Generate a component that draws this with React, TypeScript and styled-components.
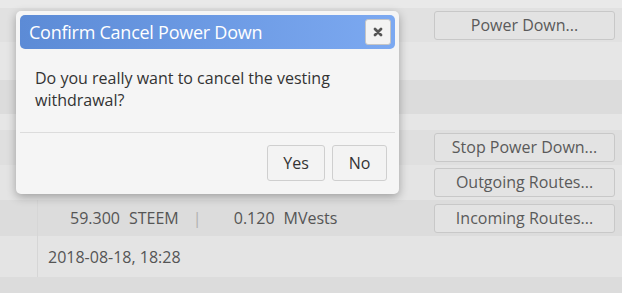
import styled, { createGlobalStyle } from 'styled-components';

const GlobalStyle = createGlobalStyle`
  html, body {
    margin: 0;
    padding: 0;
    background: #dcdcdc;
    font-family: 'Open Sans', 'Liberation Sans', sans-serif;
    overflow: hidden;
  }
`;

const Page = styled.div`
  position: relative;
  width: 622px;
  height: 293px;
  overflow: hidden;
`;

const Table = styled.div`
  display: flex;
  flex-direction: column;
  box-shadow: 0 2px 2px rgba(0, 0, 0, 0.08);
`;

const Row = styled.div<{ $h: number; $bg: string }>`
  display: flex;
  align-items: center;
  height: ${(p) => p.$h}px;
  background: ${(p) => p.$bg};
  color: #555;
  font-size: 16px;
`;

const FirstCell = styled.div<{ $line?: boolean }>`
  width: 37px;
  align-self: stretch;
  border-right: 1px solid ${(p) => (p.$line ? '#d6d6d6' : 'transparent')};
`;

const ValueCell = styled.div`
  flex: 1;
  display: flex;
  align-items: center;
  padding-left: 10px;
`;

const Amount = styled.span<{ $w: number }>`
  display: inline-block;
  width: ${(p) => p.$w}px;
  text-align: right;
`;

const Unit = styled.span`
  margin-left: 9px;
`;

const Sep = styled.span`
  margin-left: 14px;
  color: #b0b0b0;
`;

const ActionCell = styled.div`
  width: 188px;
  display: flex;
  align-items: center;
`;

const ActionButton = styled.button`
  width: 181px;
  height: 29px;
  padding: 0;
  background: #e3e3e3;
  border: 1px solid #c8c8c8;
  border-radius: 3px;
  color: #5a5a5a;
  font-family: inherit;
  font-size: 16px;
  line-height: 27px;
`;

const Dialog = styled.div`
  position: absolute;
  left: 16px;
  top: 11px;
  width: 375px;
  padding: 4px;
  background: #f5f5f5;
  border-radius: 5px;
  box-shadow: 0 3px 10px rgba(0, 0, 0, 0.3);
`;

const Header = styled.div`
  display: flex;
  align-items: center;
  justify-content: space-between;
  height: 34px;
  padding: 0 4px 0 9px;
  border-radius: 5px;
  background: linear-gradient(to right, #5c8bd6, #7ca9f1);
`;

const Title = styled.span`
  color: #fff;
  font-size: 18px;
  font-weight: 400;
  letter-spacing: -0.25px;
`;

const CloseButton = styled.button`
  width: 26px;
  height: 26px;
  padding: 0;
  display: flex;
  align-items: center;
  justify-content: center;
  background: #f3f3f3;
  border: 1px solid #c5c5c5;
  border-radius: 3px;
`;

const Body = styled.div`
  padding: 18px 15px 21px;
  color: #333;
  font-size: 16px;
  line-height: 22px;
`;

const Footer = styled.div`
  display: flex;
  justify-content: flex-end;
  gap: 7px;
  padding: 12px 8px 9px;
  border-top: 1px solid #dcdcdc;
`;

const DialogButton = styled.button<{ $w: number }>`
  width: ${(p) => p.$w}px;
  height: 36px;
  padding: 0;
  background: #f3f3f3;
  border: 1px solid #cfcfcf;
  border-radius: 3px;
  color: #333;
  font-family: inherit;
  font-size: 16px;
`;

const Below = styled.div`
  height: 16px;
  background: #dcdcdc;
`;

const rows = [
  { h: 8, bg: '#e9e9e9' },
  { h: 34, bg: '#e1e1e1', action: 'Power Down...' },
  { h: 38, bg: '#e6e6e6' },
  { h: 34, bg: '#dcdcdc' },
  { h: 16, bg: '#e6e6e6' },
  { h: 35, bg: '#dfdfdf', action: 'Stop Power Down...' },
  { h: 35, bg: '#e4e4e4', action: 'Outgoing Routes...' },
];

function CloseIcon() {
  return (
    <svg width="10" height="10" viewBox="0 0 10 10">
      <path d="M2 2 L8 8 M8 2 L2 8" stroke="#555" strokeWidth="2.8" strokeLinecap="round" />
    </svg>
  );
}

export default function App() {
  return (
    <Page>
      <GlobalStyle />
      <Table>
        {rows.map((r, i) => (
          <Row key={i} $h={r.h} $bg={r.bg}>
            <FirstCell />
            <ValueCell />
            <ActionCell>{r.action && <ActionButton>{r.action}</ActionButton>}</ActionCell>
          </Row>
        ))}
        <Row $h={36} $bg="#dcdcdc">
          <FirstCell $line />
          <ValueCell>
            <Amount $w={72}>59.300</Amount>
            <Unit>STEEM</Unit>
            <Sep>|</Sep>
            <Amount $w={73}>0.120</Amount>
            <Unit>MVests</Unit>
          </ValueCell>
          <ActionCell>
            <ActionButton>Incoming Routes...</ActionButton>
          </ActionCell>
        </Row>
        <Row $h={41} $bg="#e4e4e4">
          <FirstCell $line />
          <ValueCell>2018-08-18, 18:28</ValueCell>
          <ActionCell />
        </Row>
      </Table>
      <Below />

      <Dialog>
        <Header>
          <Title>Confirm Cancel Power Down</Title>
          <CloseButton>
            <CloseIcon />
          </CloseButton>
        </Header>
        <Body>Do you really want to cancel the vesting withdrawal?</Body>
        <Footer>
          <DialogButton $w={58}>Yes</DialogButton>
          <DialogButton $w={55}>No</DialogButton>
        </Footer>
      </Dialog>
    </Page>
  );
}
